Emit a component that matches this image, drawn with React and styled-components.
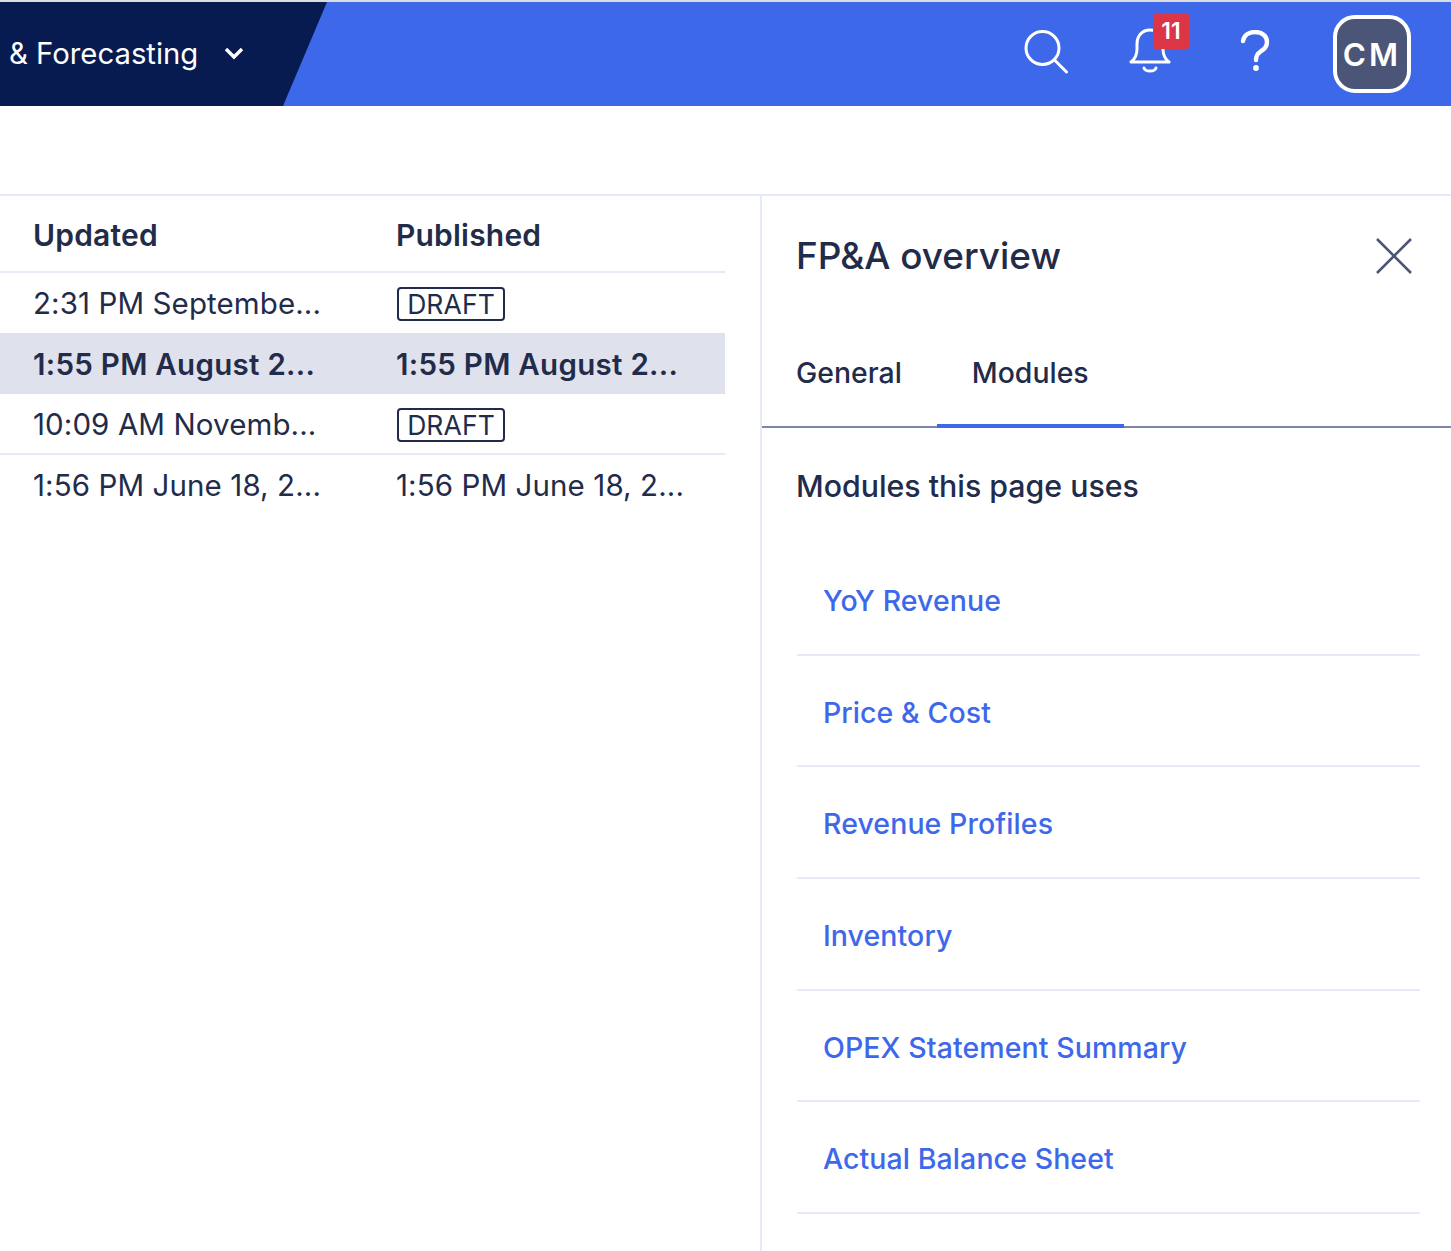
import styled, { createGlobalStyle } from 'styled-components';

const GlobalStyle = createGlobalStyle`
  html, body {
    margin: 0;
    padding: 0;
    background: #fff;
  }
  body {
    font-family: Inter, "Liberation Sans", sans-serif;
    color: #222c4a;
  }
  * {
    box-sizing: border-box;
  }
`;

const rows = [
  { updated: '2:31 PM Septembe...', published: null },
  { updated: '1:55 PM August 2...', published: '1:55 PM August 2...', selected: true },
  { updated: '10:09 AM Novemb...', published: null, underlined: true },
  { updated: '1:56 PM June 18, 2...', published: '1:56 PM June 18, 2...' },
];

const modules = [
  'YoY Revenue',
  'Price & Cost',
  'Revenue Profiles',
  'Inventory',
  'OPEX Statement Summary',
  'Actual Balance Sheet',
];

function App() {
  return (
    <Page>
      <GlobalStyle />
      <TopBar>
        <Brand>
          <BrandText>&amp; Forecasting</BrandText>
          <svg width="20" height="14" viewBox="0 0 20 14" fill="none">
            <path d="M2 3l8 8 8-8" stroke="#fff" strokeWidth="3.4" />
          </svg>
        </Brand>
        <Actions>
          <IconSlot $lift={4} $left={-2}>
            <svg width="44" height="46" viewBox="0 0 44 46" fill="none" stroke="#fff" strokeWidth="3" strokeLinecap="round">
              <circle cx="18.5" cy="19" r="16.5" />
              <path d="M30.5 31l12 12" />
            </svg>
          </IconSlot>
          <IconSlot $lift={8} $left={-2}>
            <svg width="42" height="46" viewBox="0 0 42 46" fill="none" stroke="#fff" strokeWidth="3" strokeLinecap="round" strokeLinejoin="round">
              <path d="M2 35c4-3 6-6 6-13v-5C8 9 13 3 21 3s13 6 13 14v5c0 7 2 10 6 13z" />
              <path d="M15 41c1 4 11 4 12 0" />
            </svg>
            <Badge>11</Badge>
          </IconSlot>
          <IconSlot $lift={6} $left={-1}>
            <svg width="30" height="42" viewBox="0 0 30 42" fill="none" stroke="#fff" strokeWidth="4.4" strokeLinecap="round">
              <path d="M3 11C4 5 9 2 15 2c7 0 12 4 12 10 0 5-3 7-7 10-3 2-4 4-4 8" />
              <circle cx="16" cy="38" r="1.6" fill="#fff" strokeWidth="2.6" />
            </svg>
          </IconSlot>
          <Avatar>CM</Avatar>
        </Actions>
      </TopBar>
      <Toolbar />
      <Main>
        <TablePane>
          <Table>
            <HeaderRow>
              <UpdatedCell>Updated</UpdatedCell>
              <Cell>Published</Cell>
            </HeaderRow>
            {rows.map((row) => (
              <Row key={row.updated} $selected={row.selected} $underlined={row.underlined}>
                <UpdatedCell>{row.updated}</UpdatedCell>
                <Cell>{row.published || <Tag>DRAFT</Tag>}</Cell>
              </Row>
            ))}
          </Table>
        </TablePane>
        <Panel>
          <PanelHead>
            <PanelTitle>FP&amp;A overview</PanelTitle>
            <svg width="36" height="36" viewBox="0 0 36 36" fill="none" stroke="#4a5578" strokeWidth="2.6">
              <path d="M1 1l34 34M35 1L1 35" />
            </svg>
          </PanelHead>
          <Tabs>
            <Tab>General</Tab>
            <Tab $active>Modules</Tab>
          </Tabs>
          <SectionTitle>Modules this page uses</SectionTitle>
          <ModuleList>
            {modules.map((name) => (
              <ModuleItem key={name}>{name}</ModuleItem>
            ))}
          </ModuleList>
        </Panel>
      </Main>
    </Page>
  );
}

const Page = styled.div`
  width: 1451px;
  height: 1251px;
  overflow: hidden;
  background: #fff;
`;

const TopBar = styled.header`
  height: 106px;
  border-top: 2px solid #dcdcdc;
  background: #3e68ea;
  display: flex;
  justify-content: space-between;
  align-items: center;
`;

const Brand = styled.div`
  width: 327px;
  height: 100%;
  padding: 0 0 2px 9px;
  background: #081b50;
  clip-path: polygon(0 0, 100% 0, 283px 100%, 0 100%);
  display: flex;
  align-items: center;
  gap: 26px;
  color: #fff;
`;

const BrandText = styled.span`
  font-size: 29.3px;
  font-weight: 400;
`;

const Actions = styled.div`
  display: flex;
  align-items: center;
  padding-right: 40px;
`;

const IconSlot = styled.div`
  position: relative;
  width: 104px;
  padding-bottom: ${(p) => p.$lift}px;
  padding-right: ${(p) => -p.$left}px;
  display: flex;
  justify-content: center;
`;

const Badge = styled.span`
  position: absolute;
  left: 54px;
  top: -14px;
  width: 36px;
  height: 36px;
  border-radius: 3px;
  background: #dc3545;
  color: #fff;
  font-size: 23px;
  font-weight: 600;
  display: flex;
  align-items: center;
  justify-content: center;
`;

const Avatar = styled.div`
  margin-left: 26px;
  width: 78px;
  height: 78px;
  border: 4px solid #fff;
  border-radius: 22px;
  background: #4a5578;
  color: #fff;
  font-size: 31.5px;
  font-weight: 600;
  letter-spacing: 3px;
  display: flex;
  align-items: center;
  justify-content: center;
`;

const Toolbar = styled.div`
  height: 90px;
  border-bottom: 2px solid #e6eaf6;
`;

const Main = styled.main`
  display: flex;
`;

const TablePane = styled.section`
  width: 762px;
  height: 1055px;
  border-right: 2px solid #e6eaf6;
`;

const Table = styled.div`
  width: 725px;
`;

const HeaderRow = styled.div`
  height: 76.5px;
  padding-top: 3px;
  border-bottom: 2px solid #e6eaf6;
  display: flex;
  align-items: center;
  font-size: 30px;
  font-weight: 600;
  letter-spacing: 0.2px;
`;

const Row = styled.div`
  height: ${(p) => (p.$selected || p.$underlined ? 61 : 60)}px;
  padding-top: ${(p) => (p.$selected || p.$underlined ? 1 : 0)}px;
  display: flex;
  align-items: center;
  font-size: 29.5px;
  font-weight: ${(p) => (p.$selected ? 600 : 400)};
  letter-spacing: ${(p) => (p.$selected ? 0.28 : 0.1)}px;
  background: ${(p) => (p.$selected ? '#dfe1ec' : 'transparent')};
  border-bottom: ${(p) => (p.$underlined ? '2px solid #e6eaf6' : 'none')};
`;

const Cell = styled.div`
  white-space: nowrap;
`;

const UpdatedCell = styled(Cell)`
  width: 396px;
  padding-left: 33px;
`;

const Tag = styled.span`
  width: 108px;
  height: 34px;
  margin: 2px 0 0 1px;
  padding-top: 1px;
  border: 2px solid #222c4a;
  border-radius: 4px;
  font-size: 26.5px;
  display: flex;
  align-items: center;
  justify-content: center;
`;

const Panel = styled.aside`
  flex: 1;
`;

const PanelHead = styled.div`
  height: 120px;
  padding: 0 39px 0 34px;
  display: flex;
  align-items: center;
  justify-content: space-between;
`;

const PanelTitle = styled.h2`
  margin: 0 0 2px;
  font-size: 36.9px;
  font-weight: 500;
`;

const Tabs = styled.div`
  height: 112px;
  border-bottom: 2px solid #7d86a8;
  display: flex;
`;

const Tab = styled.div`
  height: 112px;
  padding: 39px 35px 0;
  font-size: 28.4px;
  font-weight: 500;
  border-bottom: 4px solid ${(p) => (p.$active ? '#3e68ea' : 'transparent')};
  &:first-child {
    padding-left: 34px;
  }
`;

const SectionTitle = styled.h3`
  margin: 40px 0 0 34px;
  font-size: 30.3px;
  font-weight: 500;
`;

const ModuleList = styled.ul`
  list-style: none;
  margin: 40px 31px 0 35px;
  padding: 0;
`;

const ModuleItem = styled.li`
  height: 111.7px;
  padding: 3px 0 0 26px;
  border-bottom: 2px solid #e6eaf6;
  color: #3e68ea;
  font-size: 28.5px;
  font-weight: 500;
  letter-spacing: 0.08px;
  display: flex;
  align-items: center;
`;

export default App;
